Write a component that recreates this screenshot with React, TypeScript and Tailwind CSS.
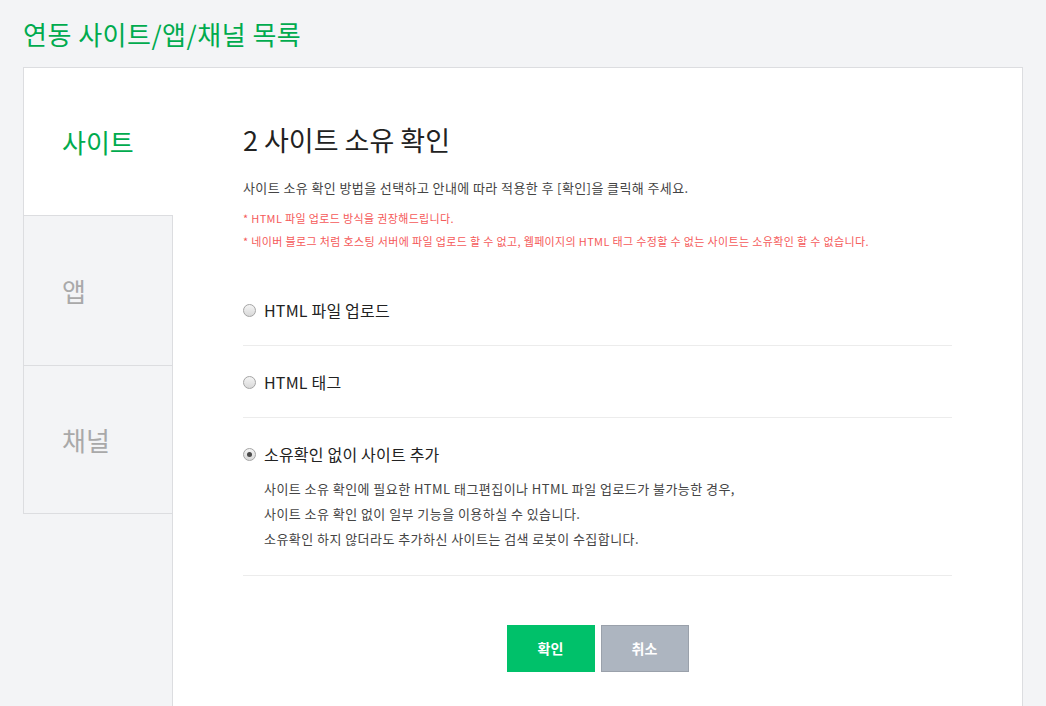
import React from 'react'

const font = { fontFamily: '"Noto Sans CJK KR", "Noto Sans", sans-serif' }

const Radio: React.FC<{ checked?: boolean }> = ({ checked }) => (
  <span className="flex h-[13px] w-[13px] shrink-0 items-center justify-center rounded-full border border-[#a5a5a5] bg-gradient-to-b from-[#f4f4f4] to-[#d9d9d9]">
    {checked && <span className="h-[5px] w-[5px] rounded-full bg-[#4a4a4a]" />}
  </span>
)

const options = [
  { label: 'HTML 파일 업로드', checked: false },
  { label: 'HTML 태그', checked: false },
  { label: '소유확인 없이 사이트 추가', checked: true },
]

const App: React.FC = () => {
  return (
    <div className="min-h-screen bg-[#f3f4f6] pl-[23px]" style={font}>
      <h1 className="pt-[18px] pb-[17px] text-[26px] leading-[32px] tracking-[0.5px] text-[#00ab4e]">
        연동 사이트/앱/채널 목록
      </h1>

      <div className="flex w-[1000px]">
        <div className="flex w-[150px] shrink-0 flex-col">
          <div className="flex h-[148px] items-center border-l border-t border-[#dcdde0] bg-white pl-[38px] text-[26px] text-[#00ab4e]">
            사이트
          </div>
          <div className="flex h-[150px] items-center border-l border-t border-r border-[#dcdde0] pl-[38px] text-[26px] text-[#a9a9a9]">
            앱
          </div>
          <div className="flex h-[149px] items-center border border-[#dcdde0] pl-[38px] text-[26px] text-[#a9a9a9]">
            채널
          </div>
          <div className="flex-1 border-r border-[#dcdde0]" />
        </div>

        <div className="flex-1 border-t border-r border-[#dcdde0] bg-white px-[70px] pt-[56px] pb-[60px]">
          <h2 className="text-[27px] leading-[32px] text-[#222]">2 사이트 소유 확인</h2>
          <p className="mt-[22px] text-[13px] leading-[20px] tracking-[0.4px] text-[#444]">
            사이트 소유 확인 방법을 선택하고 안내에 따라 적용한 후 [확인]을 클릭해 주세요.
          </p>
          <ul className="mt-[9px] text-[11px] leading-[23px] tracking-[0.35px] text-[#f55a5a]">
            <li>* HTML 파일 업로드 방식을 권장해드립니다.</li>
            <li>
              * 네이버 블로그 처럼 호스팅 서버에 파일 업로드 할 수 없고, 웹페이지의 HTML 태그 수정할 수 없는 사이트는 소유확인 할 수 없습니다.
            </li>
          </ul>

          <div className="mt-[21px]">
            {options.map((opt) => (
              <div key={opt.label} className="border-b border-[#ececec] pt-[25px] pb-[24px]">
                <label className="flex items-center gap-2 text-[16px] leading-[22px] tracking-[0.2px] text-[#222]">
                  <Radio checked={opt.checked} />
                  {opt.label}
                </label>
                {opt.checked && (
                  <div className="mt-[11px] pl-[21px] text-[13px] leading-[25px] tracking-[0.45px] text-[#444]">
                    <p>사이트 소유 확인에 필요한 HTML 태그편집이나 HTML 파일 업로드가 불가능한 경우,</p>
                    <p>사이트 소유 확인 없이 일부 기능을 이용하실 수 있습니다.</p>
                    <p>소유확인 하지 않더라도 추가하신 사이트는 검색 로봇이 수집합니다.</p>
                  </div>
                )}
              </div>
            ))}
          </div>

          <div className="mt-[49px] flex justify-center gap-[6px]">
            <button className="h-[47px] w-[88px] bg-[#00c16a] text-[14px] font-bold text-white">확인</button>
            <button className="h-[47px] w-[88px] border border-[#9aa1ab] bg-[#adb5c0] text-[14px] font-bold text-white">취소</button>
          </div>
        </div>
      </div>
    </div>
  )
}

export default App
